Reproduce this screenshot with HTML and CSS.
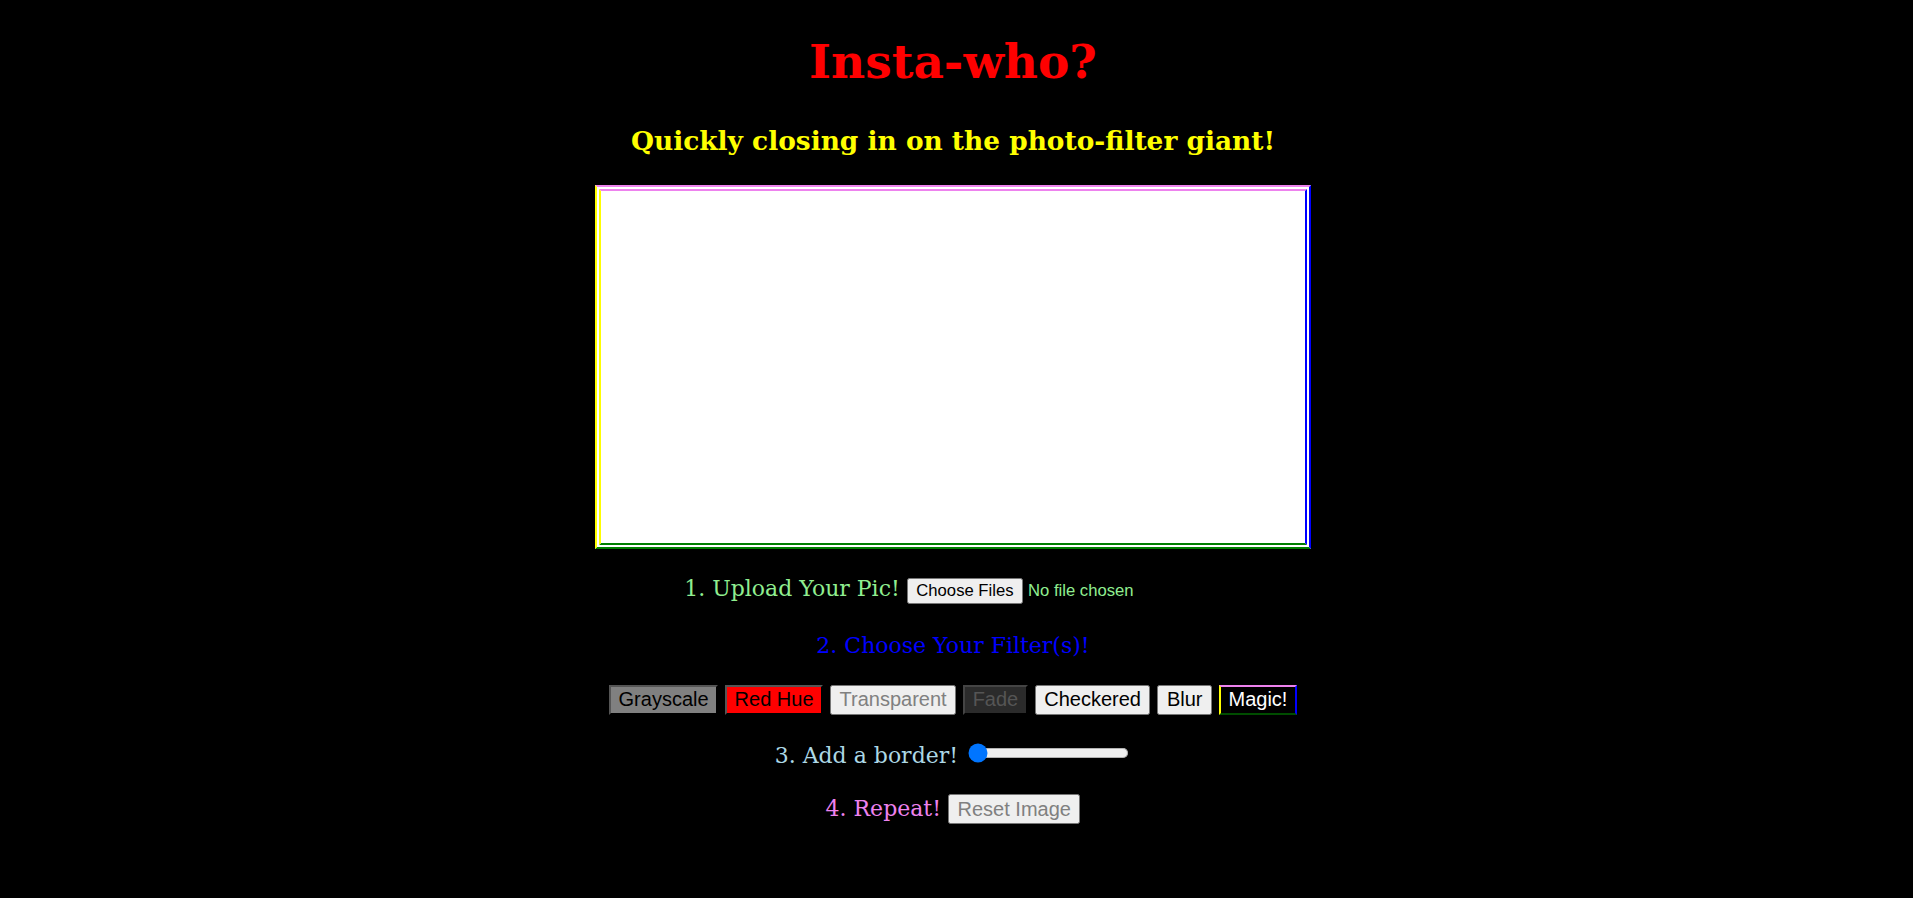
FILE: index.html
```html
<!DOCTYPE html>
<html lang="en">
<head>
<meta charset="utf-8">
<title>Insta-who?</title>
<link rel="stylesheet" href="styles.css">
</head>
<body>
<main class="page">
  <h1 class="title">Insta-who?</h1>
  <h2 class="tagline">Quickly closing in on the photo-filter giant!</h2>
  <canvas class="canvas" width="704" height="352"></canvas>
  <p class="step step-upload">1. Upload Your Pic! <input class="file" type="file" multiple accept="image/*"></p>
  <p class="step step-filters">2. Choose Your Filter(s)!</p>
  <div class="filters">
    <button class="btn btn-gray">Grayscale</button>
    <button class="btn btn-red">Red Hue</button>
    <button class="btn btn-transparent">Transparent</button>
    <button class="btn btn-fade">Fade</button>
    <button class="btn">Checkered</button>
    <button class="btn">Blur</button>
    <button class="btn btn-magic">Magic!</button>
  </div>
  <p class="step step-border">3. Add a border! <input class="range" type="range" min="0" max="50" value="0"></p>
  <p class="step step-repeat">4. Repeat! <button class="btn btn-reset">Reset Image</button></p>
</main>
</body>
</html>
```
FILE: styles.css
```css
html, body {
  margin: 0;
  padding: 0;
  background: #000;
}

body {
  font-family: "DejaVu Serif", Georgia, serif;
}

.page {
  padding: 0 7px 0 0;
  text-align: center;
}

.title {
  margin: 0;
  padding-top: 31px;
  font-size: 47px;
  line-height: 62px;
  font-weight: bold;
  color: #ff0000;
}

.tagline {
  margin: 28px 0 0;
  font-size: 26.4px;
  line-height: 40px;
  font-weight: bold;
  color: #ffff00;
}

.canvas {
  display: block;
  margin: 24px auto 0;
  width: 704px;
  height: 352px;
  border: 6px double;
  border-color: #ee82ee #0000ff #008000 #ffff00;
  background: #fff;
}

.step {
  margin: 23px 0 0;
  font-size: 22px;
  line-height: 34px;
}

.step-upload { color: #90ee90; margin-top: 23px; }
.step-filters { color: #0000ff; }
.step-border { color: #add8e6; margin-top: 24px; }
.step-repeat { color: #ee82ee; margin-top: 19px; }

.file {
  zoom: 1.25;
  font-family: "Liberation Sans", Arial, sans-serif;
  font-size: 13.333px;
  color: #90ee90;
}

.range {
  zoom: 1.25;
}

.filters {
  margin-top: 22px;
  display: flex;
  justify-content: center;
  gap: 7px;
}

.btn {
  zoom: 1.25;
  font-family: "Liberation Sans", Arial, sans-serif;
  font-size: 16px;
}

.btn-gray {
  background-color: #808080;
  border: 2px outset #555;
}

.btn-red {
  background-color: #ff0000;
  border: 2px outset #555;
}

.btn-transparent {
  color: #808080;
}

.btn-fade {
  background-color: #2b2b2b;
  color: #555;
  border: 2px outset #444;
}

.btn-magic {
  background-color: #000;
  color: #fff;
  border: 2px solid;
  border-color: #ee82ee #0000ff #004d00 #ffff00;
}

.btn-reset {
  color: #808080;
}
```
